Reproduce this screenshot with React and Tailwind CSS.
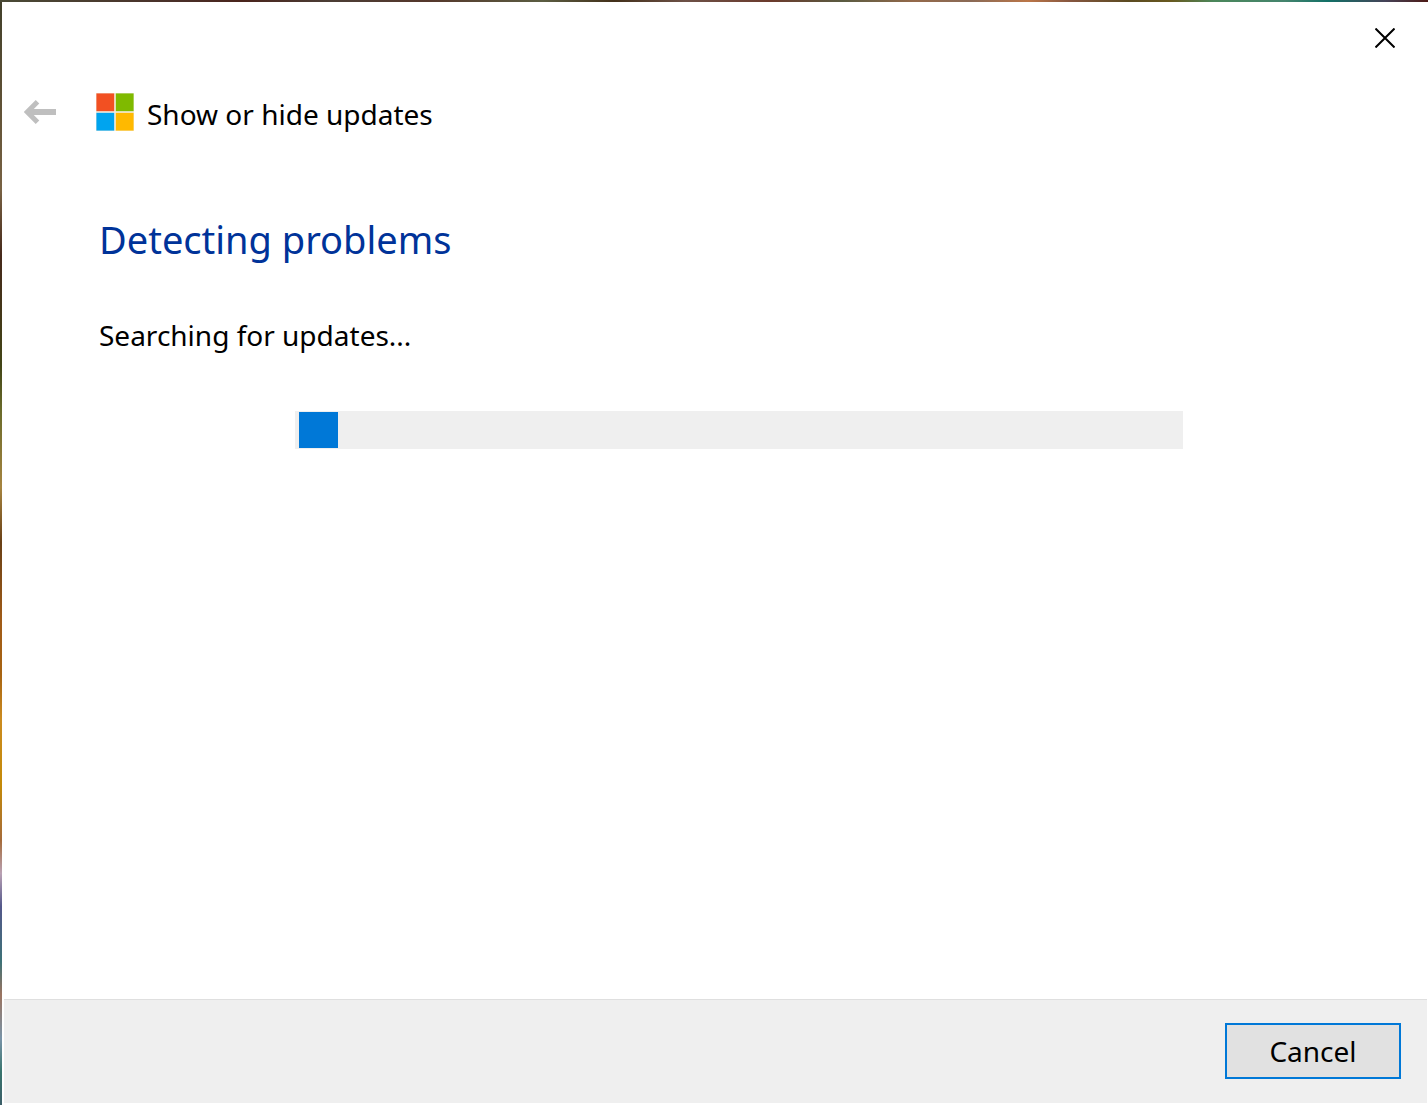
import React from 'react'

const CloseIcon = () => (
  <svg className="w-5 h-5" viewBox="0 0 20 20" fill="none" stroke="currentColor" aria-hidden="true">
    <path strokeWidth={2} d="M0.5 0.5l19 19M19.5 0.5l-19 19" />
  </svg>
)

const BackIcon = () => (
  <svg className="w-8 h-6" viewBox="0 0 32 24" fill="none" stroke="currentColor" aria-hidden="true">
    <path strokeWidth={5} d="M13.5 1.8L3.3 12l10.2 10.2" />
    <path strokeWidth={6} d="M4 12h28" />
  </svg>
)

const MicrosoftLogo = () => (
  <svg className="w-[38px] h-[38px]" viewBox="0 0 38 38" aria-hidden="true">
    <rect width="38" height="38" fill="#f3ede0" />
    <rect x="0.4" y="0.4" width="17.8" height="17.8" fill="#f25022" />
    <rect x="19.8" y="0.4" width="17.8" height="17.8" fill="#7fba00" />
    <rect x="0.4" y="19.8" width="17.8" height="17.8" fill="#00a4ef" />
    <rect x="19.8" y="19.8" width="17.8" height="17.8" fill="#ffb900" />
  </svg>
)

const ProgressBar = ({ label }) => (
  <div
    role="progressbar"
    aria-label={label}
    className="w-full max-w-[888px] h-[38px] mx-auto px-1 py-px bg-[#efefef]"
  >
    <div className="w-[39px] h-full bg-[#0078d7]" />
  </div>
)

const App = () => {
  return (
    <div className="min-h-screen flex flex-col font-['Noto_Sans','Segoe_UI',sans-serif] text-[28px] leading-10 text-black">
      {/* desktop wallpaper showing around the window */}
      <div className="h-0.5 bg-[linear-gradient(to_right,#4a4a36_0%,#4a3029_12%,#4a241c_17%,#4b3d35_23%,#55372b_30%,#5b5d42_38%,#43301a_43%,#6d5147_48%,#6b3a2c_54%,#5a5b41_59%,#94694a_64%,#8a6a56_68%,#bb7648_72%,#85563f_75%,#5b4a21_79%,#68591f_82%,#4b875b_85%,#44846d_90%,#127067_93%,#454358_97%,#4d1a16_100%)]" />
      <div className="flex-1 flex">
        <div className="w-0.5 shrink-0 bg-[linear-gradient(to_bottom,#42402b_0%,#625337_10%,#786244_17%,#46291b_23%,#424517_33%,#6a6b2b_37%,#a68440_44%,#694016_49%,#a05b18_56%,#a86412_61%,#cb8b20_65%,#c48a08_71%,#a56b3a_76%,#b9a1b4_79%,#54588b_82%,#3d7277_87%,#9b7460_90%,#7994a8_94%,#39756e_97%,#3c5e68_100%)]" />
        <div className="flex-1 flex flex-col bg-white">
          <div className="flex justify-end pt-[22px] pr-[29px]">
            <button type="button" aria-label="Close" className="p-1">
              <CloseIcon />
            </button>
          </div>

          <header className="flex items-center pl-[22px] pt-[38px]">
            <button type="button" aria-label="Back" disabled className="mr-10 text-[#bfbfbf]">
              <BackIcon />
            </button>
            <MicrosoftLogo />
            <span className="ml-[13px] pt-1">Show or hide updates</span>
          </header>

          <main className="flex-1 pl-[97px] pr-[49px] pt-[77px]">
            <h1 className="text-[38px] leading-[56px] text-[#003399]">Detecting problems</h1>
            <p className="mt-12 mb-14">Searching for updates...</p>
            <ProgressBar label="Searching for updates" />
          </main>

          <footer className="flex justify-end ml-0.5 mr-px mb-0.5 pt-[23px] pb-6 pr-[26px] bg-[#efefef] border-t border-[#dfdfdf]">
            <button
              type="button"
              className="w-44 h-14 flex items-center justify-center bg-[#e1e1e1] border-2 border-[#0078d7]"
            >
              Cancel
            </button>
          </footer>
        </div>
      </div>
    </div>
  )
}

export default App
